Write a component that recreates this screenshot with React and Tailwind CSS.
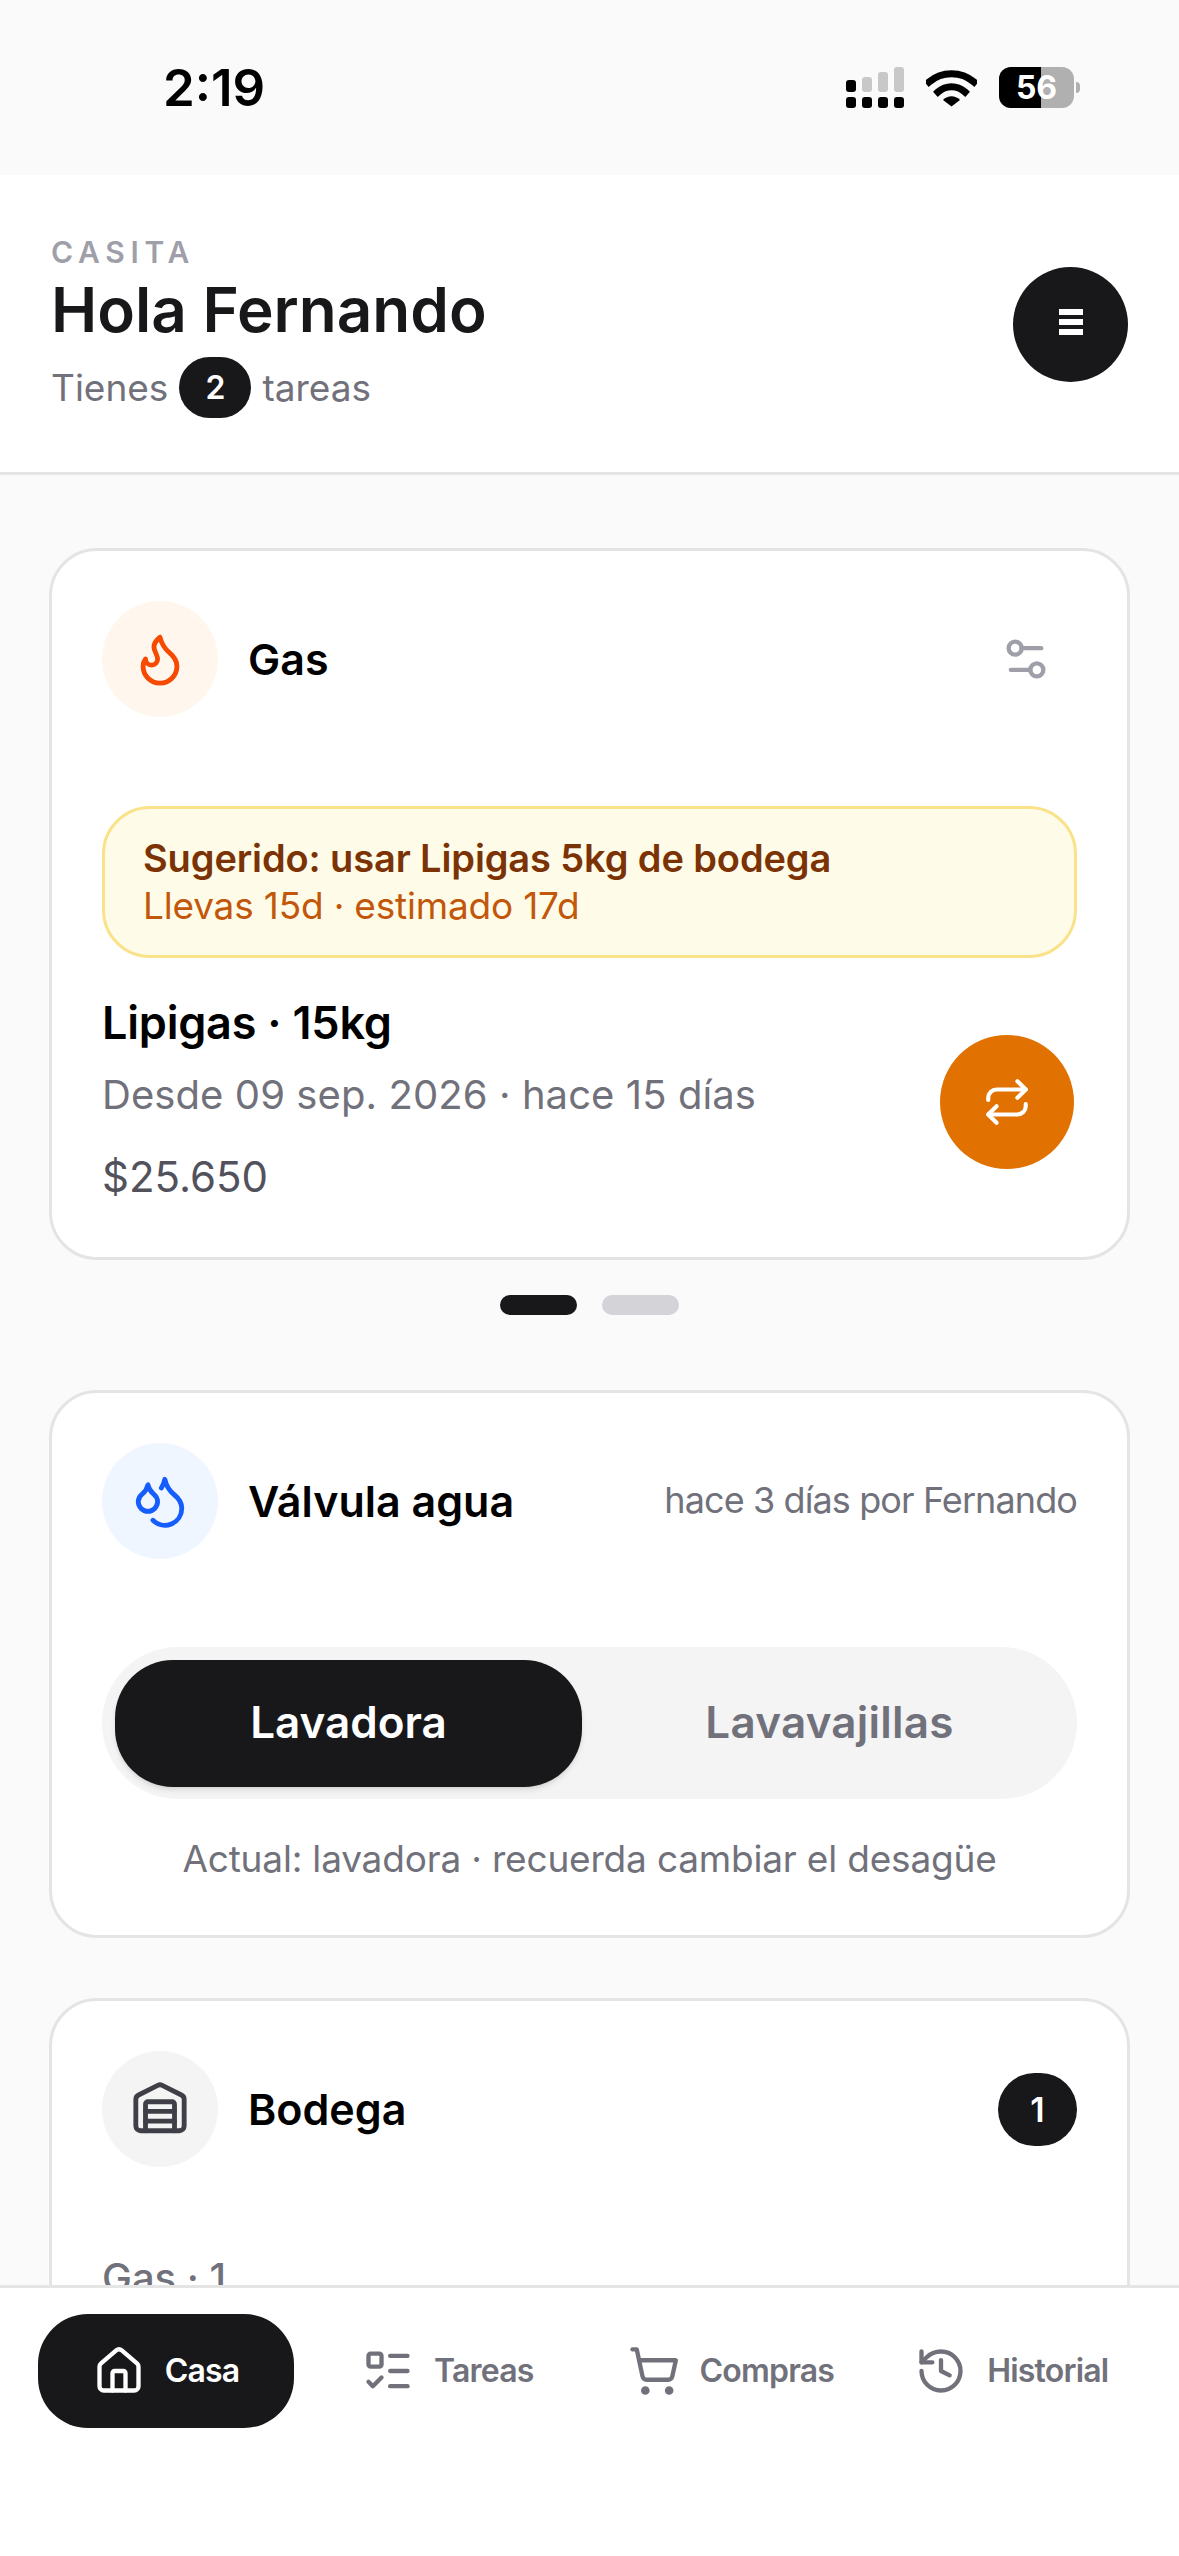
import { Droplets, Flame, History, House, ListTodo, Repeat, Settings2, ShoppingCart, Warehouse } from 'lucide-react';

const navItems = [
  { icon: House, label: 'Casa', active: true, offset: 'ml-0' },
  { icon: ListTodo, label: 'Tareas', offset: 'ml-[68px]' },
  { icon: ShoppingCart, label: 'Compras', offset: 'ml-[94px]' },
  { icon: History, label: 'Historial', offset: 'ml-[81px]' },
];

function StatusBar() {
  return (
    <div className="relative h-[175px] shrink-0 bg-neutral-50 text-black">
      <span className="absolute left-[163px] top-[57px] text-[51px] leading-[62px] font-semibold">2:19</span>
      <svg className="absolute left-[846px] top-[66px]" width="58" height="43" viewBox="0 0 58 43">
        <rect x="0" y="14" width="10" height="12" rx="3" fill="#000" />
        <rect x="16" y="11" width="10" height="15" rx="3" fill="#c8c8c8" />
        <rect x="32" y="6" width="10" height="20" rx="3" fill="#c8c8c8" />
        <rect x="48" y="1" width="10" height="25" rx="3" fill="#c8c8c8" />
        <rect x="0" y="31" width="10" height="11" rx="3" fill="#000" />
        <rect x="16" y="31" width="10" height="11" rx="3" fill="#000" />
        <rect x="32" y="31" width="10" height="11" rx="3" fill="#000" />
        <rect x="48" y="31" width="10" height="11" rx="3" fill="#000" />
      </svg>
      <svg className="absolute left-[926px] top-[68px]" width="51" height="39" viewBox="0 0 51 39">
        <path d="M3 14 C16 3 35 3 48 14" fill="none" stroke="#000" strokeWidth="7" strokeLinecap="square" />
        <path d="M12 24 C20 17 31 17 39 24" fill="none" stroke="#000" strokeWidth="7" strokeLinecap="square" />
        <path d="M17 32 C22 27 29 27 34 32 L25.5 38.5 Z" fill="#000" />
      </svg>
      <div className="absolute left-[999px] top-[67px] flex h-[41px] w-[75px] overflow-hidden rounded-[12px] bg-[#b0b0b0]">
        <div className="h-full w-[42px] bg-black" />
        <span className="absolute inset-0 flex items-center justify-center text-[32px] font-bold text-white">56</span>
      </div>
      <div className="absolute left-[1076px] top-[82px] h-[11px] w-[4px] rounded-r-full bg-[#b0b0b0]" />
    </div>
  );
}

function CardHeader({ icon: Icon, tint, iconColor, title, children }) {
  return (
    <div className="flex h-[116px] items-center">
      <div className={`flex h-[116px] w-[116px] shrink-0 items-center justify-center rounded-full ${tint} ${iconColor}`}>
        <Icon size={58} strokeWidth={2} />
      </div>
      <h2 className="ml-[30px] flex-1 text-[43px] font-semibold text-black">{title}</h2>
      {children}
    </div>
  );
}

export default function App() {
  return (
    <div className="flex h-[2556px] w-[1179px] flex-col overflow-hidden bg-neutral-50 font-['Inter',sans-serif] text-zinc-900">
      <StatusBar />

      {/* Header */}
      <header className="flex h-[300px] shrink-0 items-start justify-between border-b-[3px] border-neutral-200 bg-white pl-[51px] pr-[51px] pt-[62px]">
        <div>
          <p className="text-[30px] leading-[30px] font-semibold tracking-[0.19em] text-zinc-400">CASITA</p>
          <h1 className="mt-[8px] text-[62px] leading-[70px] font-semibold">Hola Fernando</h1>
          <div className="mt-[12px] flex items-center gap-[11px] text-[37px] text-zinc-500">
            <span>Tienes</span>
            <span className="flex h-[61px] w-[72px] items-center justify-center rounded-full bg-zinc-900 text-[32px] font-semibold text-white">2</span>
            <span>tareas</span>
          </div>
        </div>
        <button className="mt-[30px] flex h-[115px] w-[115px] flex-col items-center justify-center gap-[4px] rounded-full bg-zinc-900 pb-[6px]">
          <span className="h-[6px] w-[24px] bg-white" />
          <span className="h-[6px] w-[24px] bg-white" />
          <span className="h-[6px] w-[24px] bg-white" />
        </button>
      </header>

      {/* Cards */}
      <main className="min-h-0 flex-1 overflow-hidden px-[49px] pt-[73px]">
        <section className="h-[712px] rounded-[48px] border-[3px] border-zinc-200 bg-white px-[50px] pt-[50px]">
          <CardHeader icon={Flame} tint="bg-orange-50" iconColor="text-orange-600" title="Gas">
            <button className="flex w-[102px] items-center justify-center text-zinc-400">
              <Settings2 size={52} strokeWidth={2} />
            </button>
          </CardHeader>
          <div className="mt-[89px] flex h-[152px] flex-col justify-center rounded-[48px] border-[3px] border-[#fae28a] bg-yellow-50 px-[38px]">
            <p className="text-[38px] leading-[47px] font-semibold tracking-[-0.003em] text-amber-900">Sugerido: usar Lipigas 5kg de bodega</p>
            <p className="text-[37px] leading-[47px] tracking-[-0.005em] text-[#c2570c]">Llevas 15d · estimado 17d</p>
          </div>
          <div className="mt-[37px] flex items-end justify-between">
            <div>
              <p className="text-[45px] leading-[56px] font-semibold tracking-[-0.005em] text-black">Lipigas · 15kg</p>
              <p className="mt-[16px] text-[40px] leading-[56px] tracking-[0.002em] text-zinc-500">Desde 09 sep. 2026 · hace 15 días</p>
              <p className="mt-[26px] text-[42px] leading-[56px] text-zinc-600">$25.650</p>
            </div>
            <button className="mb-[36px] mr-[3px] flex h-[134px] w-[134px] items-center justify-center rounded-full bg-[#e17100] text-white">
              <Repeat size={50} strokeWidth={2} />
            </button>
          </div>
        </section>

        <div className="mt-[35px] flex justify-center gap-[25px]">
          <span className="h-[20px] w-[77px] rounded-full bg-zinc-900" />
          <span className="h-[20px] w-[77px] rounded-full bg-zinc-300" />
        </div>

        <section className="mt-[75px] h-[548px] rounded-[48px] border-[3px] border-zinc-200 bg-white px-[50px] pt-[50px]">
          <CardHeader icon={Droplets} tint="bg-blue-50" iconColor="text-blue-600" title="Válvula agua">
            <span className="-mt-[2px] text-[36px] tracking-[-0.025em] text-zinc-500">hace 3 días por Fernando</span>
          </CardHeader>
          <div className="mt-[88px] flex h-[152px] items-center rounded-full bg-zinc-100 pl-[13px]">
            <button className="h-[127px] w-[467px] rounded-[58px] bg-zinc-900 pb-[3px] text-[44px] font-semibold text-white shadow-md">Lavadora</button>
            <button className="flex-1 pb-[3px] text-[44px] font-semibold tracking-[0.005em] text-zinc-500">Lavavajillas</button>
          </div>
          <p className="mt-[37px] text-center text-[37px] leading-[46px] tracking-[-0.005em] text-zinc-500">Actual: lavadora · recuerda cambiar el desagüe</p>
        </section>

        <section className="mt-[60px] h-[500px] rounded-[48px] border-[3px] border-zinc-200 bg-white px-[50px] pt-[50px]">
          <CardHeader icon={Warehouse} tint="bg-zinc-100" iconColor="text-zinc-700" title="Bodega">
            <span className="flex h-[73px] w-[79px] items-center justify-center rounded-full bg-zinc-900 text-[34px] font-semibold text-white">1</span>
          </CardHeader>
          <p className="mt-[88px] text-[40px] leading-[46px] font-medium text-zinc-500">Gas · 1</p>
        </section>
      </main>

      {/* Bottom nav */}
      <nav className="flex h-[271px] shrink-0 items-start border-t-[3px] border-neutral-200 bg-white px-[38px] pt-[26px]">
        {navItems.map(({ icon: Icon, label, active, offset }) => (
          <button
            key={label}
            className={`flex h-[114px] items-center gap-[20px] text-[32px] font-semibold tracking-[-0.025em] ${offset} ${
              active ? 'w-[256px] justify-center rounded-[50px] bg-zinc-900 text-white' : 'text-zinc-500'
            }`}
          >
            <Icon size={52} strokeWidth={2} />
            {label}
          </button>
        ))}
      </nav>
    </div>
  );
}
